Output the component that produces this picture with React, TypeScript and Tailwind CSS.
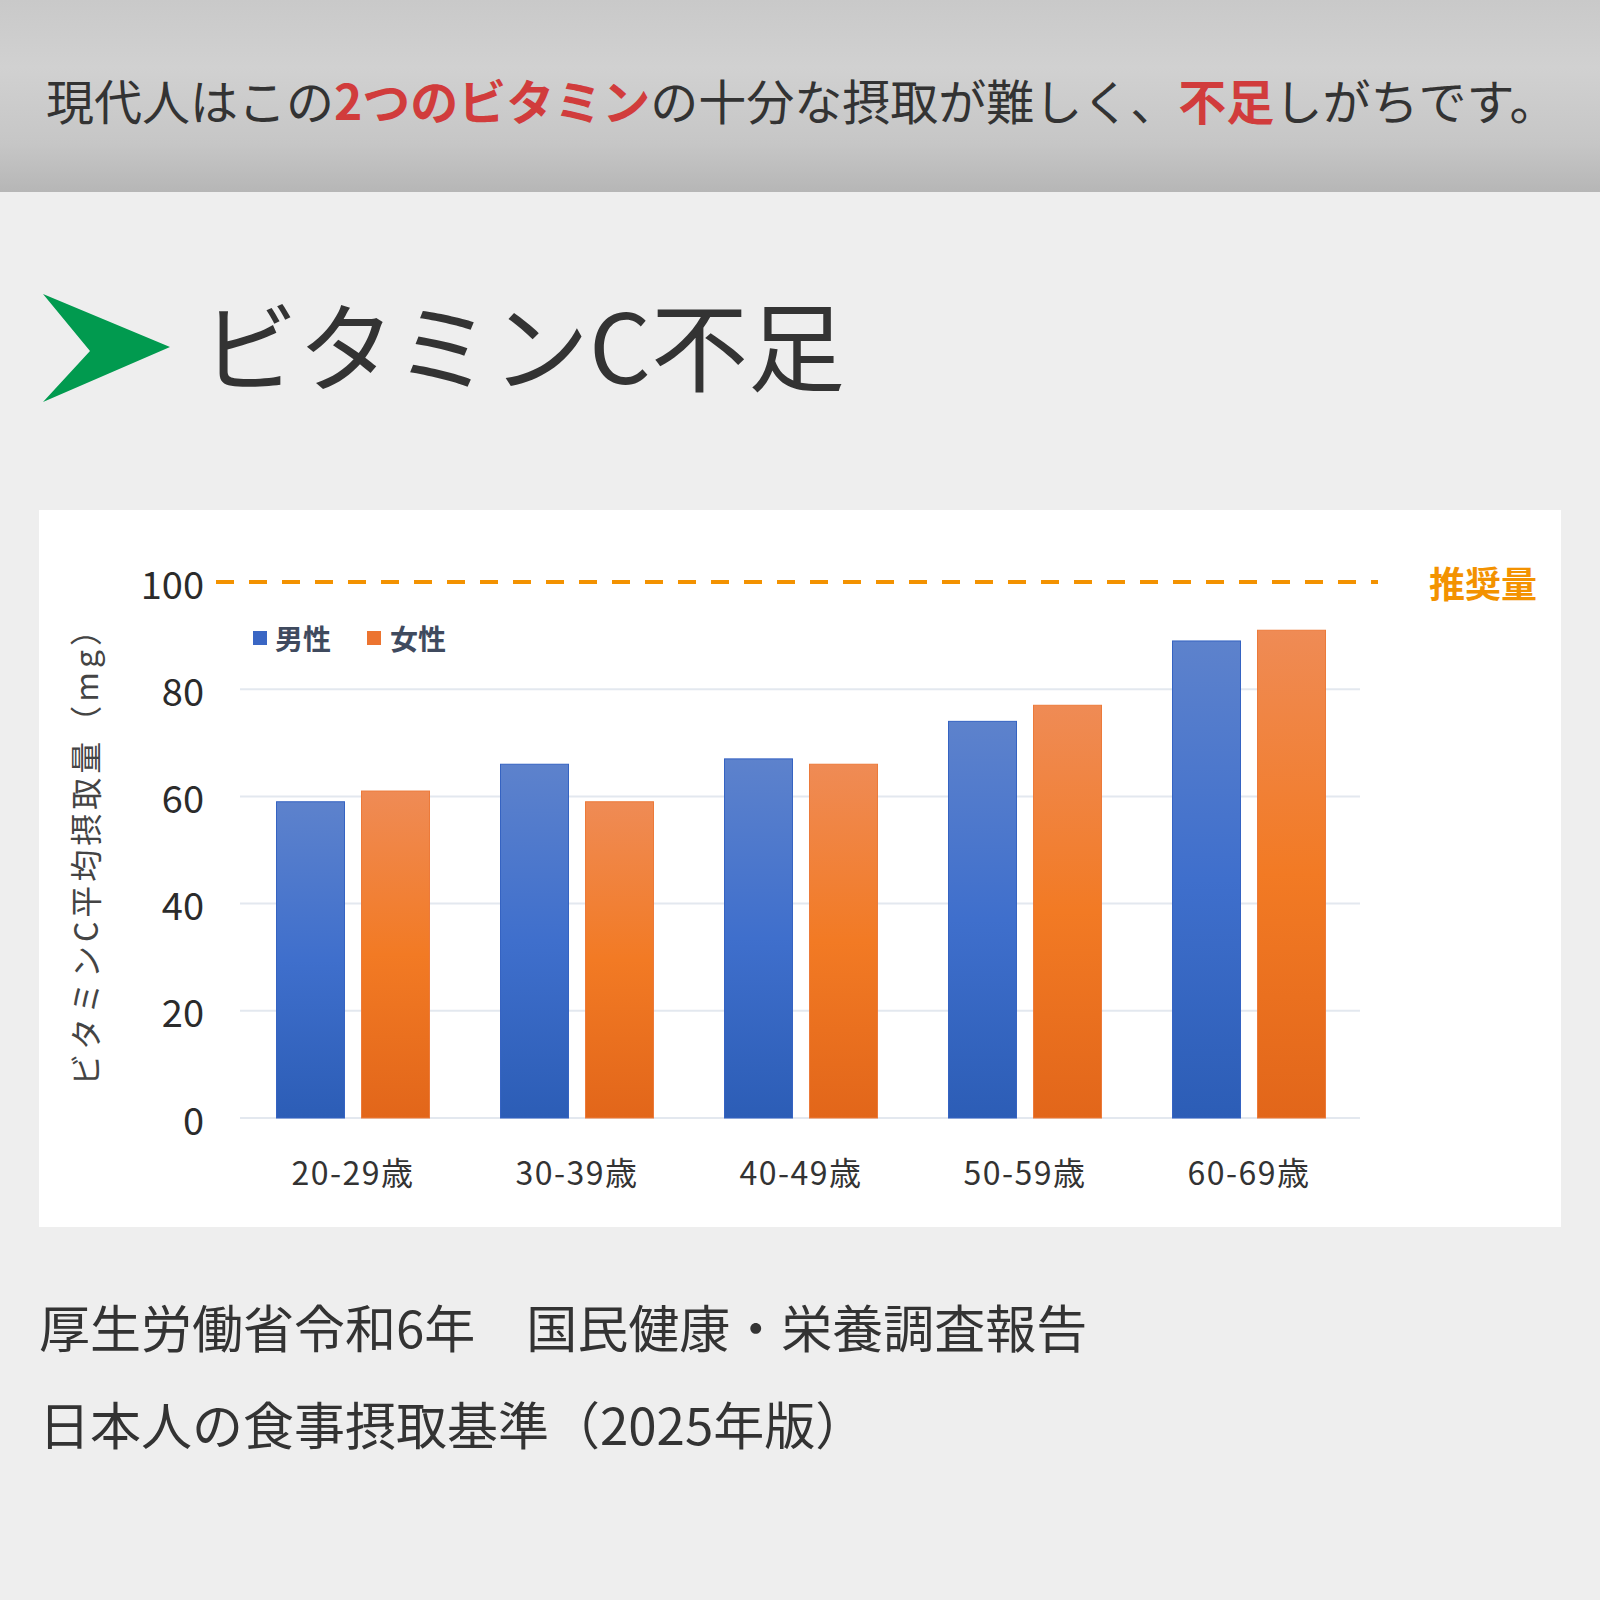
const font = { fontFamily: '"Noto Sans CJK JP", "Noto Sans", sans-serif' };

const groups = [
  { label: "20-29歳", male: 59, female: 61 },
  { label: "30-39歳", male: 66, female: 59 },
  { label: "40-49歳", male: 67, female: 66 },
  { label: "50-59歳", male: 74, female: 77 },
  { label: "60-69歳", male: 89, female: 91 },
];

const ticks = [0, 20, 40, 60, 80, 100];

// chart geometry (px inside the white panel)
const baseY = 608;
const unit = 5.36;
const plotLeft = 201;
const plotRight = 1321;
const groupW = (plotRight - plotLeft) / groups.length;
const barW = 68;

function VitaminChart() {
  return (
    <svg width="1522" height="717" viewBox="0 0 1522 717" className="block" style={font}>
      <defs>
        <linearGradient id="male" x1="0" y1="0" x2="0" y2="1">
          <stop offset="0" stopColor="#5d82cc" />
          <stop offset="0.5" stopColor="#3f6fcc" />
          <stop offset="1" stopColor="#2c5db6" />
        </linearGradient>
        <linearGradient id="female" x1="0" y1="0" x2="0" y2="1">
          <stop offset="0" stopColor="#ef8b55" />
          <stop offset="0.5" stopColor="#f27a24" />
          <stop offset="1" stopColor="#e2661a" />
        </linearGradient>
      </defs>

      {/* gridlines */}
      {ticks.slice(0, 5).map((t) => (
        <line key={t} x1={plotLeft} x2={plotRight} y1={baseY - t * unit} y2={baseY - t * unit} stroke="#e3e8ef" strokeWidth="2" />
      ))}

      {/* recommended line */}
      <line x1="177" x2="1339" y1={baseY - 100 * unit} y2={baseY - 100 * unit} stroke="#f39200" strokeWidth="4" strokeDasharray="18 15" />
      <text x="1390" y={baseY - 100 * unit} dominantBaseline="central" fontSize="36" fontWeight="700" fill="#f39200">
        推奨量
      </text>

      {/* y ticks */}
      {ticks.map((t) => (
        <text key={t} x="165" y={baseY - t * unit} textAnchor="end" dominantBaseline="central" fontSize="38" fill="#2b2b2b">
          {t}
        </text>
      ))}

      {/* y axis title */}
      <text
        x="45"
        y="338"
        transform="rotate(-90 45 338)"
        textAnchor="middle"
        dominantBaseline="central"
        fontSize="32"
        letterSpacing="4"
        fill="#444"
      >
        ビタミンC平均摂取量（mg）
      </text>

      {/* legend */}
      <rect x="214" y="121" width="14" height="14" fill="#3a66c4" />
      <text x="236" y="128" dominantBaseline="central" fontSize="28" fontWeight="700" fill="#3f4a5e">男性</text>
      <rect x="328" y="121" width="14" height="14" fill="#ec7430" />
      <text x="351" y="128" dominantBaseline="central" fontSize="28" fontWeight="700" fill="#3f4a5e">女性</text>

      {/* bars */}
      {groups.map((g, i) => {
        const gx = plotLeft + i * groupW;
        return (
          <g key={g.label}>
            <rect x={gx + 36.5} y={baseY - g.male * unit} width={barW} height={g.male * unit} fill="url(#male)" stroke="#3563c2" strokeWidth="1" />
            <rect x={gx + 121.5} y={baseY - g.female * unit} width={barW} height={g.female * unit} fill="url(#female)" stroke="#ec7a3a" strokeWidth="1" />
            <text x={gx + 113} y="661" textAnchor="middle" dominantBaseline="central" fontSize="32" letterSpacing="1.5" fill="#333">
              {g.label}
            </text>
          </g>
        );
      })}
    </svg>
  );
}

export default function App() {
  return (
    <div className="w-[1600px] h-[1600px] bg-[#eeeeee] text-[#333333]" style={font}>
      {/* Header band */}
      <header className="h-[192px] flex items-center pl-[46px] pt-[6px] bg-[linear-gradient(180deg,#c9c9c9_0%,#d1d1d1_35%,#c6c6c6_75%,#b6b6b6_100%)]">
        <p className="text-[48px] leading-none text-[#333333] whitespace-nowrap">
          現代人はこの<span className="text-[#d13c3c] font-bold">2つのビタミン</span>の十分な摂取が難しく、
          <span className="text-[#d13c3c] font-bold">不足</span>しがちです。
        </p>
      </header>

      {/* Title */}
      <section className="flex items-center gap-[30px] pl-[43px] pt-[102px]">
        <svg width="128" height="110" viewBox="0 0 128 110" className="shrink-0">
          <polygon points="0,0 127,53 0,108 47,57" fill="#019a4f" />
        </svg>
        <h2 className="text-[97px] leading-none text-[#333333] font-normal -mt-[16px]">ビタミンC不足</h2>
      </section>

      {/* Chart */}
      <div className="mt-[106px] ml-[39px] w-[1522px] h-[717px] bg-white">
        <VitaminChart />
      </div>

      {/* Sources */}
      <div className="pl-[39px] pt-[74px] flex flex-col gap-[46px] text-[51px] leading-none text-[#333333]">
        <p>厚生労働省令和6年　国民健康・栄養調査報告</p>
        <p>日本人の食事摂取基準（2025年版）</p>
      </div>
    </div>
  );
}
